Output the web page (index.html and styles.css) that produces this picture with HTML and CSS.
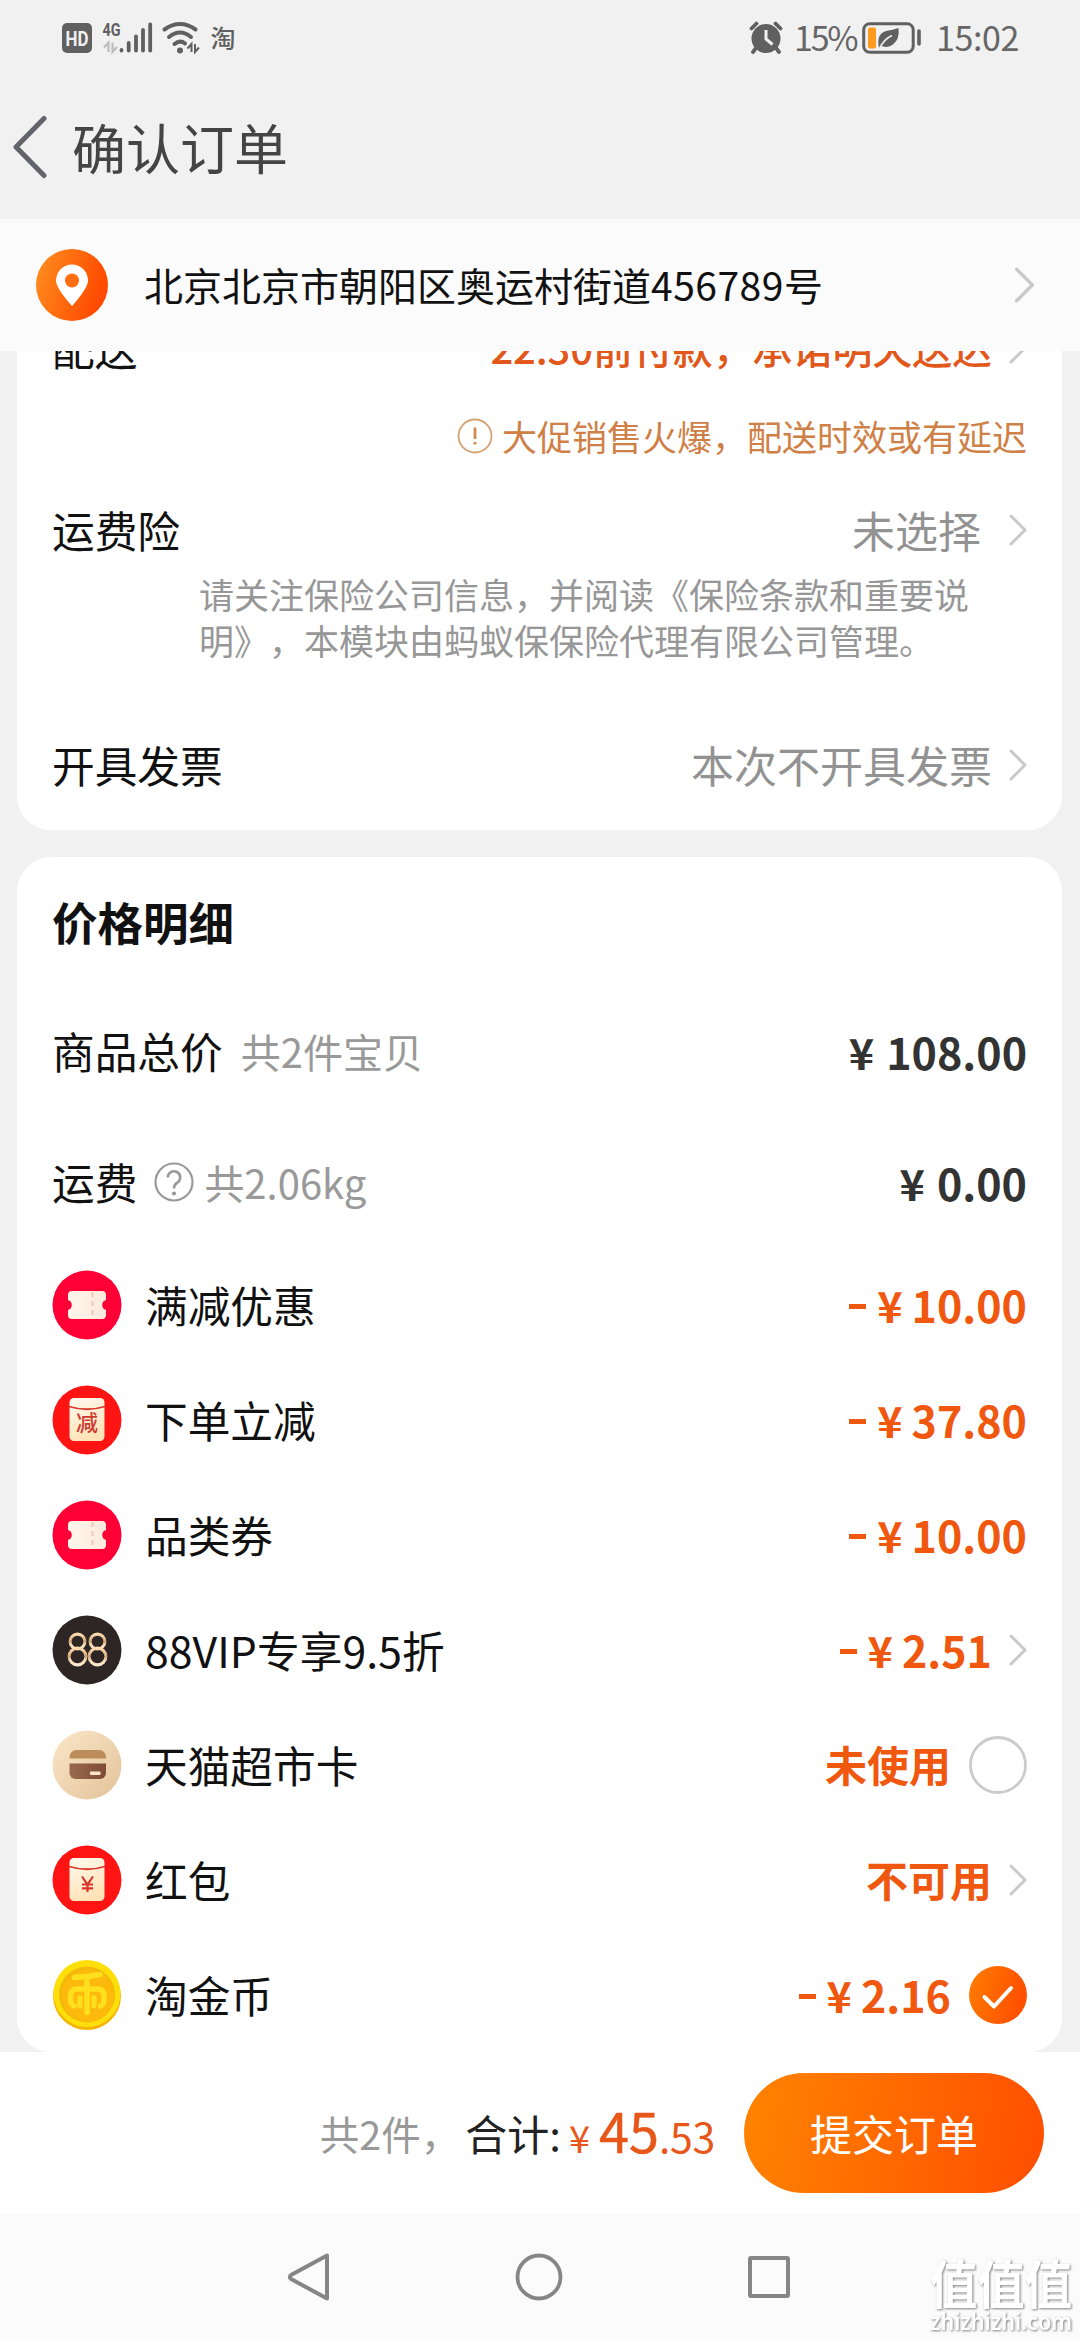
FILE: index.html
```html
<!DOCTYPE html>
<html lang="zh-CN">
<head>
<meta charset="utf-8">
<title>确认订单</title>
<link rel="stylesheet" href="styles.css">
</head>
<body>
<svg class="defs" width="0" height="0" aria-hidden="true">
  <defs>
    <linearGradient id="orange" x1="0" y1="0" x2="1" y2="0.3"><stop offset="0" stop-color="#ff9020"/><stop offset="1" stop-color="#ff4a00"/></linearGradient>
    <linearGradient id="check" x1="0" y1="0" x2="1" y2="0.3"><stop offset="0" stop-color="#ff7d00"/><stop offset="1" stop-color="#ff5000"/></linearGradient>
    <linearGradient id="paper" x1="0" y1="0" x2="0.4" y2="1"><stop offset="0" stop-color="#fffaf0"/><stop offset="1" stop-color="#ffe3b8"/></linearGradient>
    <linearGradient id="ticket" x1="0" y1="0" x2="1" y2="0"><stop offset="0" stop-color="#fff6ec"/><stop offset="1" stop-color="#ffe9dd"/></linearGradient>
    <linearGradient id="beige" x1="0" y1="0" x2="1" y2="1"><stop offset="0" stop-color="#fbe6c8"/><stop offset="1" stop-color="#e2c39a"/></linearGradient>
    <linearGradient id="card" x1="0" y1="0" x2="1" y2="0"><stop offset="0" stop-color="#9a6a50"/><stop offset="1" stop-color="#7d4b34"/></linearGradient>
    <linearGradient id="gold88" x1="0" y1="0" x2="0" y2="1"><stop offset="0" stop-color="#ffdcae"/><stop offset="0.5" stop-color="#d0a678"/><stop offset="0.7" stop-color="#f3d6b0"/><stop offset="1" stop-color="#ffe9cc"/></linearGradient>
    <symbol id="chevron" viewBox="0 0 18 32"><path d="M2 2 16 16 2 30" fill="none" stroke="#c9c9c9" stroke-width="3" stroke-linecap="round" stroke-linejoin="round"/></symbol>
    <symbol id="coupon" viewBox="0 0 70 70">
      <circle cx="35" cy="35" r="34.5" fill="#ff0036"/>
      <path d="M20 21H50a4 4 0 0 1 4 4v5a5.2 5.2 0 0 0 0 10v5a4 4 0 0 1-4 4H20a4 4 0 0 1-4-4v-5a5.2 5.2 0 0 0 0-10v-5a4 4 0 0 1 4-4z" fill="url(#ticket)"/>
      <path d="M40.500 22v27" stroke="#f3c9bd" stroke-width="2.200" stroke-dasharray="5 4" fill="none"/>
    </symbol>
    <symbol id="envelope" viewBox="0 0 70 70">
      <circle cx="35" cy="35" r="34.500" fill="#ff1414"/>
      <rect x="17.500" y="13" width="35" height="43" rx="4.500" fill="url(#paper)"/>
      <path d="M17 21.500Q35 27 53 21.500" fill="none" stroke="#d9352b" stroke-width="1.800"/>
    </symbol>
  </defs>
</svg>

<div class="page">
  <div class="status">
    <svg class="status-left" viewBox="0 0 180 36" width="180" height="36">
      <rect x="0" y="3" width="30" height="30" rx="5" fill="#606060"/>
      <text x="15" y="25.500" class="hd" text-anchor="middle" textLength="23" lengthAdjust="spacingAndGlyphs">HD</text>
      <text x="40.500" y="16" class="net" textLength="18" lengthAdjust="spacingAndGlyphs">4G</text>
      <path d="M46.500 32V22.500l-4.500 5M50.500 22.500V32l4.500-5" stroke="#bdbdbd" stroke-width="2.200" fill="none"/>
      <g stroke="#606060" stroke-width="3.800" stroke-linecap="round"><path d="M59.500 30v.5M66.700 23v7.500M74 16.500v14M81 10v20.500M88.200 4.500v26"/></g>
      <g fill="none" stroke="#606060" stroke-width="4" stroke-linecap="round">
        <path d="M102.500 9.500Q118 -1.500 133.500 9.500M107 17Q118 8 129 17M112.500 24Q118 19.500 123 23.500"/>
      </g>
      <circle cx="118" cy="30.500" r="3" fill="#606060"/>
      <path d="M129.500 32v-8l-4 4.500M133 24v8l4-4.500" stroke="#606060" stroke-width="2" fill="none"/>
      <text x="148.500" y="28" class="tao">淘</text>
    </svg>
    <div class="status-right">
      <svg viewBox="0 0 34 34" width="34" height="34">
        <circle cx="17" cy="17.500" r="14.500" fill="#606060"/>
        <path d="M2.500 7.500 7.500 2.500M26.500 2.500l5 5M7 27l-3 4M27 27l3 4" stroke="#606060" stroke-width="3.800" stroke-linecap="round"/>
        <path d="M17 9v9l6.500 5.500" fill="none" stroke="#f1f1f1" stroke-width="3"/>
      </svg>
      <span class="pct">15%</span>
      <svg class="battery" viewBox="0 0 60 32" width="60" height="32">
        <rect x="1.700" y="1.700" width="49.500" height="28.600" rx="6" fill="none" stroke="#606060" stroke-width="3"/>
        <rect x="6" y="5.500" width="8" height="21" rx="2" fill="#ff9a1f"/>
        <path d="M17 26Q14 12 24 9Q31 8 36.500 6Q38 17 31 22.500Q26 26.500 20 24z" fill="#606060"/>
        <path d="M17.500 26.500Q22 17 30 13.500" fill="none" stroke="#f1f1f1" stroke-width="1.600"/>
        <path d="M57 9v13" stroke="#606060" stroke-width="3.600" stroke-linecap="round"/>
      </svg>
      <span class="clock">15:02</span>
    </div>
  </div>

  <header class="titlebar">
    <svg class="back" viewBox="0 0 36 64" width="36" height="64"><path d="M32 3.500 4 32 32 60.500" fill="none" stroke="#62646c" stroke-width="5" stroke-linecap="round" stroke-linejoin="round"/></svg>
    <h1>确认订单</h1>
  </header>

  <div class="address">
    <svg viewBox="0 0 72 72" width="72" height="72">
      <circle cx="36" cy="36" r="36" fill="url(#orange)"/>
      <path d="M36 57Q20 39 20 31.500a16 16 0 0 1 32 0Q52 39 36 57z" fill="#fff"/>
      <circle cx="36" cy="31.500" r="7" fill="#ff6e13"/>
    </svg>
    <span class="address-text">北京北京市朝阳区奥运村街道<span class="digits">456789</span>号</span>
    <svg class="go" width="21" height="36"><use href="#chevron"/></svg>
  </div>

  <main class="content">
    <section class="panel">
      <div class="row delivery">
        <span class="label">配送</span>
        <span class="promise">22:30前付款，承诺明天送达</span>
        <svg class="chev" width="18" height="32"><use href="#chevron"/></svg>
      </div>
      <div class="warning">
        <svg viewBox="0 0 36 36" width="36" height="36"><circle cx="18" cy="18" r="16.500" fill="none" stroke="#d5a273" stroke-width="1.800"/><path d="M18 9.500v11.500M18 24v2.500" stroke="#d58a4c" stroke-width="2.800"/></svg>
        <span>大促销售火爆，配送时效或有延迟</span>
      </div>
      <div class="row insurance">
        <span class="label">运费险</span>
        <span class="value unpicked">未选择</span>
        <svg class="chev" width="18" height="32"><use href="#chevron"/></svg>
      </div>
      <p class="note">请关注保险公司信息，并阅读《保险条款和重要说<br>明》，本模块由蚂蚁保保险代理有限公司管理。</p>
      <div class="row invoice">
        <span class="label">开具发票</span>
        <span class="value">本次不开具发票</span>
        <svg class="chev" width="18" height="32"><use href="#chevron"/></svg>
      </div>
    </section>

    <section class="panel prices">
      <h2>价格明细</h2>
      <div class="row summary">
        <span class="label">商品总价</span>
        <span class="extra goods">共2件宝贝</span>
        <span class="price dark"><span>¥</span><span>108.00</span></span>
      </div>
      <div class="row summary">
        <span class="label">运费</span>
        <svg class="help" viewBox="0 0 40 40" width="40" height="40"><circle cx="20" cy="20" r="18.500" fill="none" stroke="#999" stroke-width="2.200"/><path d="M13.800 15.500a6.200 6.200 0 1 1 9.500 5.200Q20 22.800 20 26.500" fill="none" stroke="#999" stroke-width="2.600"/><circle cx="20" cy="31.500" r="2.100" fill="#999"/></svg>
        <span class="extra">共2.06kg</span>
        <span class="price dark"><span>¥</span><span>0.00</span></span>
      </div>

      <div class="row discount">
        <svg class="icon" width="70" height="70"><use href="#coupon"/></svg>
        <span class="label">满减优惠</span>
        <span class="price"><i></i><span>¥</span><span>10.00</span></span>
      </div>
      <div class="row discount">
        <svg class="icon" width="70" height="70"><use href="#envelope"/><text x="35" y="46" class="jian" text-anchor="middle">减</text></svg>
        <span class="label">下单立减</span>
        <span class="price"><i></i><span>¥</span><span>37.80</span></span>
      </div>
      <div class="row discount">
        <svg class="icon" width="70" height="70"><use href="#coupon"/></svg>
        <span class="label">品类券</span>
        <span class="price"><i></i><span>¥</span><span>10.00</span></span>
      </div>
      <div class="row discount">
        <svg class="icon" viewBox="0 0 70 70" width="70" height="70">
          <circle cx="35" cy="35" r="34.500" fill="#2d2624"/>
          <g fill="none" stroke="url(#gold88)" stroke-width="3.100"><circle cx="25.500" cy="26.500" r="7.400"/><circle cx="25.500" cy="41.500" r="8.400"/><circle cx="45.500" cy="26.500" r="7.400"/><circle cx="45.500" cy="41.500" r="8.400"/></g>
        </svg>
        <span class="label vip">88VIP专享9.5折</span>
        <span class="price"><i></i><span>¥</span><span>2.51</span></span>
        <svg class="chev" width="18" height="32"><use href="#chevron"/></svg>
      </div>
      <div class="row discount">
        <svg class="icon" viewBox="0 0 70 70" width="70" height="70">
          <circle cx="35" cy="35" r="34.500" fill="url(#beige)"/>
          <path d="M17.500 28.500V27a7 7 0 0 1 7-7H47a7 7 0 0 1 7 7v1.500z" fill="#bd8c5b"/>
          <path d="M17.500 33.500H54V43a6 6 0 0 1-6 6H23.500a6 6 0 0 1-6-6z" fill="url(#card)"/>
          <rect x="38" y="41.500" width="10.500" height="3.500" rx=".8" fill="#ffe4c8"/>
        </svg>
        <span class="label">天猫超市卡</span>
        <span class="state">未使用</span>
        <svg class="radio" viewBox="0 0 58 58" width="58" height="58"><circle cx="29" cy="29" r="27.500" fill="#fff" stroke="#cbcbcb" stroke-width="2.800"/></svg>
      </div>
      <div class="row discount">
        <svg class="icon" width="70" height="70"><use href="#envelope"/><path d="M30 31.500l5.500 8 5.500-8M35.500 39v8M30 39.500h11M30 43.300h11" fill="none" stroke="#d9352b" stroke-width="2.200"/></svg>
        <span class="label">红包</span>
        <span class="state">不可用</span>
        <svg class="chev" width="18" height="32"><use href="#chevron"/></svg>
      </div>
      <div class="row discount">
        <svg class="icon" viewBox="0 0 70 70" width="70" height="70">
          <circle cx="35" cy="36" r="34" fill="#f5b400"/>
          <circle cx="35" cy="33.500" r="33.500" fill="#ffdf0a"/>
          <circle cx="35" cy="34.500" r="28" fill="#f2b90a"/>
          <circle cx="36" cy="35.500" r="26" fill="#fdba0d"/>
          <g fill="none" stroke="#ffe01c" stroke-width="5.400" stroke-linecap="round" stroke-linejoin="round"><path d="M22.500 17.500Q36 17 48 14.500M35 18V52.500M22 46q-3.500-1.500-3.500-6v-4q0-7 7-7H45q7 0 7 7v4q0 4.500-3.500 6M28 38v7.500M42 38v7.500"/></g>
        </svg>
        <span class="label">淘金币</span>
        <span class="price"><i></i><span>¥</span><span>2.16</span></span>
        <svg class="radio" viewBox="0 0 58 58" width="58" height="58"><circle cx="29" cy="29" r="29" fill="url(#check)"/><path d="M15.500 31 25 40.500 42 22" fill="none" stroke="#fff" stroke-width="4" stroke-linecap="round" stroke-linejoin="round"/></svg>
      </div>
    </section>
  </main>

  <footer class="checkout">
    <span class="count">共2件，</span>
    <span class="total">合计:</span>
    <span class="amount"><span class="yen">¥</span><span class="big">45</span><span class="cents">.53</span></span>
    <button class="submit">提交订单</button>
  </footer>

  <nav class="navbar">
    <svg viewBox="0 0 44 50" width="44" height="50"><path d="M40 3.500V46.500L4 27Q1.500 25 4 23z" fill="none" stroke="#868686" stroke-width="4" stroke-linejoin="round"/></svg>
    <svg viewBox="0 0 48 48" width="48" height="48"><circle cx="24" cy="24" r="21.500" fill="none" stroke="#868686" stroke-width="3.800"/></svg>
    <svg viewBox="0 0 44 44" width="44" height="44"><rect x="3" y="3" width="38" height="38" rx="1" fill="none" stroke="#868686" stroke-width="4"/></svg>
  </nav>
  <div class="watermark">
    <svg viewBox="0 0 150 84" width="150" height="84">
      <text x="5" y="48" class="wm-cn" textLength="142" lengthAdjust="spacingAndGlyphs">值值值</text>
      <text x="5" y="74" class="wm-en" textLength="142" lengthAdjust="spacingAndGlyphs">zhizhizhi.com</text>
    </svg>
  </div>
</div>
</body>
</html>
```

FILE: styles.css
```css
* { box-sizing: border-box; }
body {
  margin: 0;
  font-family: "Noto Sans CJK SC", sans-serif;
  color: #111;
  background: #f1f1f1;
  text-spacing-trim: space-all;
}
svg { display: block; flex: none; }
.defs { position: absolute; }
.page {
  position: relative;
  width: 1080px;
  height: 2340px;
  display: flex;
  flex-direction: column;
  overflow: hidden;
  white-space: nowrap;
}

/* Status bar */
.status {
  height: 75px;
  padding: 0 63px 0 62px;
  display: flex;
  align-items: center;
  justify-content: space-between;
  color: #666;
}
.status-left { overflow: visible; }
.status-right { display: flex; align-items: center; font-size: 34px; line-height: 40px; }
.pct, .clock { padding-bottom: 2px; }
.pct { width: 61px; margin-left: 11px; letter-spacing: -2.2px; }
.battery { margin-left: 7px; }
.clock { margin-left: 14px; width: 81px; letter-spacing: -0.4px; }
.hd { font: bold 20px Roboto, sans-serif; fill: #f1f1f1; }
.net { font: bold 19px Roboto, sans-serif; fill: #606060; }
.tao { font: 500 25px "Noto Sans CJK SC", sans-serif; fill: #606060; }

/* Title bar */
.titlebar { height: 144px; display: flex; align-items: center; padding-left: 12px; }
.titlebar h1 { margin: 0 0 0 24px; font-size: 54px; font-weight: 400; line-height: 80px; color: #444; }

/* Address */
.address { height: 132px; display: flex; align-items: center; background: #fbfbfb; padding: 0 45px 0 36px; }
.address-text { margin-left: 36px; padding-bottom: 2px; font-size: 39px; line-height: 58px; }
.address .digits { letter-spacing: 0.5px; }
.go { margin-left: auto; }

/* Cards */
.content { height: 1701px; padding: 0 18px 0 17px; display: flex; flex-direction: column; gap: 27px; overflow: hidden; }
.panel { flex: none; background: #fff; border-radius: 0 0 34px 34px; padding: 0 35px 0 36px; }
.prices { height: 1195px; border-radius: 34px; }
.row { display: flex; align-items: center; line-height: 60px; }
.label { margin-left: -1px; font-size: 42.7px; padding-bottom: 2px; }
.chev { margin-left: 17px; }
.delivery { height: 90px; margin-top: -48px; }
.promise { margin-left: auto; padding-bottom: 2px; font-size: 40px; font-weight: 500; color: #e2571a; letter-spacing: -0.1px; }
.warning { height: 85px; display: flex; align-items: center; justify-content: flex-end; gap: 9px; font-size: 35px; color: #cf8046; }
.insurance { height: 82px; margin-top: 11px; }
.value { margin-left: auto; padding-bottom: 2px; font-size: 43px; color: #929292; }
.unpicked { margin-right: 11px; }
.note { margin: 0 0 0 146px; font-size: 35px; line-height: 46px; color: #979797; }
.invoice { height: 130px; margin-top: 37px; }

h2 { margin: 0 0 0 -1px; height: 129px; line-height: 129px; font-size: 45.5px; font-weight: 700; }
.summary { height: 130.5px; }
.extra { font-size: 40px; color: #999; }
.goods { margin-left: 18px; }
.help { margin-left: 17px; margin-right: 10px; }
.price { margin-left: auto; display: flex; align-items: center; gap: 9px; font-size: 43px; font-weight: 700; color: #f0570f; }
.price i { width: 17px; height: 5px; margin: 4px 2px 0 0; background: currentColor; }
.dark { color: #333; gap: 12px; }

.discount { height: 115px; }
.discount .price, .discount .state { padding-bottom: 1px; }
.icon { margin-left: -1px; margin-right: 24px; }
.discount .vip { letter-spacing: 0.1px; }
.jian { font: 500 22px "Noto Sans CJK SC", sans-serif; fill: #cf3a30; }
.state { margin-left: auto; font-size: 42px; font-weight: 700; color: #f0570f; }
.radio { margin-left: 18px; }

/* Checkout bar */
.checkout { height: 162px; background: #fff; display: flex; align-items: center; justify-content: flex-end; padding-right: 36px; line-height: 60px; }
.count { font-size: 39.5px; color: #999; }
.total { margin-left: 5px; font-size: 42px; color: #222; }
.amount { display: flex; align-items: baseline; color: #e8571a; margin-left: 8px; margin-right: 29px; }
.yen { font-size: 38px; }
.big { font-size: 54px; margin-left: 9px; -webkit-text-stroke: 0.5px #e8571a; }
.cents { font-size: 41px; letter-spacing: -0.3px; }
.submit {
  width: 300px;
  height: 120px;
  padding: 0 0 2px;
  border: 0;
  border-radius: 60px;
  background: linear-gradient(100deg, #ff8400, #ff4e00);
  color: #fff;
  font: 400 42px "Noto Sans CJK SC", sans-serif;
}

/* System navigation */
.navbar { height: 126px; background: #fbfbfb; display: flex; align-items: center; justify-content: space-between; padding: 0 289px 0 287px; }
.watermark { position: absolute; left: 925px; top: 2256px; }
.watermark text { fill: #fff; filter: drop-shadow(1.5px 1.5px 1px #808080); }
.wm-cn { font: 700 52px "Noto Sans CJK SC", sans-serif; }
.wm-en { font: 600 24px "Noto Sans", sans-serif; }
```
